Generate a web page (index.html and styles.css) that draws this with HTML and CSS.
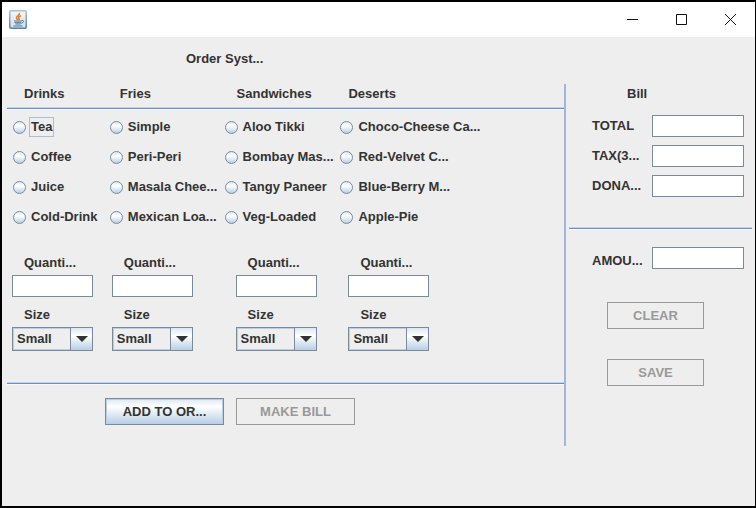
FILE: index.html
```html
<!DOCTYPE html>
<html lang="en">
<head>
<meta charset="utf-8">
<title>Order System</title>
<link rel="stylesheet" href="styles.css">
</head>
<body>
<header class="titlebar">
  <svg class="app-icon" viewBox="0 0 18 19" aria-hidden="true">
    <defs>
      <linearGradient id="tile" x1="0" y1="0" x2="0" y2="1"><stop offset="0" stop-color="#f4f7f9"/><stop offset="1" stop-color="#d3dee6"/></linearGradient>
      <linearGradient id="edge" x1="0" y1="0" x2="0" y2="1"><stop offset="0" stop-color="#b4c1cb"/><stop offset="1" stop-color="#57819f"/></linearGradient>
    </defs>
    <rect x="0.75" y="0.75" width="16.5" height="17.5" rx="1.5" fill="url(#tile)" stroke="url(#edge)" stroke-width="1.5"/>
    <path d="M10.300 3C11.300 5.500 6.800 6 7.500 8c.2.8.9 1.200 1.300 2M12 5.800c-2.200.8-2.900 1.600-2.100 2.600.6.700.5 1.200-.3 1.800" fill="none" stroke="#ee8036" stroke-width="1.600"/>
    <path d="M5 11h7.500M5.500 12.700h6.500M6.500 14h5M4.500 16h9" fill="none" stroke="#47789d" stroke-width="1"/>
    <path d="M12.500 10.500c3-.8 2.800 2.300-.6 2.800" fill="none" stroke="#47789d"/>
  </svg>
  <div class="window-controls">
    <button type="button" aria-label="Minimize"><svg viewBox="0 0 13 13"><path d="M1 6.500h11"/></svg></button>
    <button type="button" aria-label="Maximize"><svg viewBox="0 0 13 13"><path d="M1.500 1.500h10v10h-10z"/></svg></button>
    <button type="button" aria-label="Close"><svg viewBox="0 0 13 13"><path d="M1 1l11 11M12 1L1 12"/></svg></button>
  </div>
</header>

<main class="content">
  <h1>Order Syst...</h1>
  <div class="panels">
    <section class="order">
      <div class="heads">
        <h2>Drinks</h2><h2>Fries</h2><h2>Sandwiches</h2><h2>Deserts</h2>
      </div>
      <hr>
      <div class="choices">
        <div class="choice-list">
          <label><input type="radio" name="drink"><span class="focused">Tea</span></label>
          <label><input type="radio" name="drink"><span>Coffee</span></label>
          <label><input type="radio" name="drink"><span>Juice</span></label>
          <label><input type="radio" name="drink"><span>Cold-Drink</span></label>
        </div>
        <div class="choice-list">
          <label><input type="radio" name="fries"><span>Simple</span></label>
          <label><input type="radio" name="fries"><span>Peri-Peri</span></label>
          <label><input type="radio" name="fries"><span>Masala Chee...</span></label>
          <label><input type="radio" name="fries"><span>Mexican Loa...</span></label>
        </div>
        <div class="choice-list">
          <label><input type="radio" name="sandwich"><span>Aloo Tikki</span></label>
          <label><input type="radio" name="sandwich"><span>Bombay Mas...</span></label>
          <label><input type="radio" name="sandwich"><span>Tangy Paneer</span></label>
          <label><input type="radio" name="sandwich"><span>Veg-Loaded</span></label>
        </div>
        <div class="choice-list">
          <label><input type="radio" name="desert"><span>Choco-Cheese Ca...</span></label>
          <label><input type="radio" name="desert"><span>Red-Velvet C...</span></label>
          <label><input type="radio" name="desert"><span>Blue-Berry M...</span></label>
          <label><input type="radio" name="desert"><span>Apple-Pie</span></label>
        </div>
      </div>
      <div class="amounts">
        <div class="amount">
          <label for="q1">Quanti...</label><input class="field" id="q1" type="text">
          <label for="s1">Size</label><div class="combo"><select id="s1"><option>Small</option></select></div>
        </div>
        <div class="amount">
          <label for="q2">Quanti...</label><input class="field" id="q2" type="text">
          <label for="s2">Size</label><div class="combo"><select id="s2"><option>Small</option></select></div>
        </div>
        <div class="amount">
          <label for="q3">Quanti...</label><input class="field" id="q3" type="text">
          <label for="s3">Size</label><div class="combo"><select id="s3"><option>Small</option></select></div>
        </div>
        <div class="amount">
          <label for="q4">Quanti...</label><input class="field" id="q4" type="text">
          <label for="s4">Size</label><div class="combo"><select id="s4"><option>Small</option></select></div>
        </div>
      </div>
      <hr>
      <div class="actions">
        <button class="btn" type="button">ADD TO OR...</button>
        <button class="btn" type="button" disabled>MAKE BILL</button>
      </div>
    </section>

    <section class="bill">
      <h2>Bill</h2>
      <div class="bill-rows">
        <label for="total">TOTAL</label><input class="field" id="total" type="text">
        <label for="tax">TAX(3...</label><input class="field" id="tax" type="text">
        <label for="donation">DONA...</label><input class="field" id="donation" type="text">
      </div>
      <hr>
      <div class="bill-rows payable">
        <label for="amount">AMOU...</label><input class="field" id="amount" type="text">
      </div>
      <div class="bill-actions">
        <button class="btn" type="button" disabled>CLEAR</button>
        <button class="btn" type="button" disabled>SAVE</button>
      </div>
    </section>
  </div>
</main>
</body>
</html>
```
FILE: styles.css
```css
* {
  box-sizing: border-box;
}

body {
  margin: 0;
  min-height: 100vh;
  display: flex;
  flex-direction: column;
  border: 2px solid #000;
  border-right-width: 1px;
  background: #eee;
  color: #333;
  font: bold 13px/16px "Liberation Sans", Arial, sans-serif;
}

h1,
h2 {
  margin: 0;
  font: inherit;
}

input,
select,
button {
  margin: 0;
  color: inherit;
  font: inherit;
}

hr {
  width: 100%;
  height: 3px;
  margin: 0;
  border: 0;
  background: linear-gradient(#c6d2e6 0 1px, #6e8cc8 1px 2px, #fafafa 2px);
}

/* Title bar */
.titlebar {
  display: flex;
  align-items: center;
  justify-content: space-between;
  height: 35px;
  padding-left: 7px;
  background: #fff;
}

.app-icon {
  width: 18px;
  height: 19px;
}

.window-controls {
  display: flex;
}

.window-controls button {
  display: flex;
  align-items: center;
  justify-content: center;
  width: 49px;
  height: 33px;
  padding: 0;
  border: 0;
  background: none;
}

.window-controls svg {
  width: 13px;
  height: 13px;
  fill: none;
  stroke: #111;
}

/* Layout */
h1 {
  padding: 14px 0 17px 184px;
}

.panels {
  display: flex;
}

.order {
  flex: 557;
  display: flex;
  flex-direction: column;
  height: 362px;
  padding-left: 5px;
  border-right: 2px solid #a3b5db;
}

.heads {
  display: grid;
  grid-template-columns: 96fr 117fr 112fr 216fr;
  padding: 2px 0 5px 17px;
}

.choices {
  display: grid;
  grid-template-columns: 97fr 115fr 116fr 224fr;
  padding: 2px 0 0 6px;
}

.choice-list {
  display: grid;
  grid-auto-rows: 30px;
  min-width: 0;
}

.choice-list label {
  display: flex;
  align-items: center;
  gap: 3px;
  height: 30px;
  white-space: nowrap;
}

.choice-list span {
  padding: 1px;
  border: 1px solid transparent;
}

.choice-list .focused {
  border-color: #a9bfd5;
}

.choice-list input {
  appearance: none;
  flex: none;
  width: 13px;
  height: 13px;
  border: 1px solid #7a8a99;
  border-radius: 50%;
  background: linear-gradient(#dde8f3, #fff 35%, #b8cfe5);
}

.amounts {
  display: grid;
  grid-template-columns: 100fr 124fr 113fr 216fr;
  padding: 23px 0 31px 5px;
}

.amount {
  display: grid;
  grid-template-rows: 20px 22px 30px 24px;
  grid-template-columns: 81px;
}

.amount label {
  padding-left: 12px;
}

.amount .field + label {
  padding-top: 10px;
}

.field {
  width: 100%;
  height: 22px;
  padding: 0 4px;
  border: 1px solid #7a8a99;
  background: #fff;
  outline: 0;
}

.combo {
  position: relative;
  height: 24px;
}

.combo select {
  appearance: none;
  width: 100%;
  height: 24px;
  padding: 0 20px 0 4px;
  border: 1px solid #7a8a99;
  border-radius: 0;
  background: #eee;
  box-shadow: inset 0 0 0 1px #b8cfe5;
}

.combo::before {
  content: "";
  position: absolute;
  top: 1px;
  right: 1px;
  bottom: 1px;
  width: 21px;
  border-left: 1px solid #7a8a99;
  background: linear-gradient(#dde8f3, #fff 35%, #b8cfe5);
  pointer-events: none;
}

.combo::after {
  content: "";
  position: absolute;
  top: 9px;
  right: 5px;
  border: 6px solid transparent;
  border-top-color: #333;
  border-bottom: 0;
  pointer-events: none;
}

.btn {
  height: 27px;
  padding: 0;
  border: 1px solid #7a8a99;
  background: linear-gradient(#dde8f3, #fff 30%, #b8cfe5);
  box-shadow: inset 0 0 0 1px #b8cfe5;
  white-space: nowrap;
}

.btn:disabled {
  border-color: #999;
  background: #eee;
  box-shadow: none;
  color: #999;
}

.actions {
  display: grid;
  grid-template-columns: 119px 119px;
  gap: 12px;
  padding: 13px 0 0 98px;
}

/* Bill */
.bill {
  flex: 183;
  padding: 0 3px;
}

.bill h2 {
  padding: 2px 0 0 58px;
}

.bill-rows {
  display: grid;
  grid-template-columns: 60px 1fr;
  grid-auto-rows: 30px;
  align-items: center;
  padding: 9px 8px 26px 23px;
}

.bill-rows.payable {
  padding-top: 13px;
  padding-bottom: 29px;
}

.payable label {
  padding-top: 6px;
}

.bill-actions {
  display: grid;
  grid-template-columns: 97px;
  gap: 30px;
  padding-left: 38px;
}
```
